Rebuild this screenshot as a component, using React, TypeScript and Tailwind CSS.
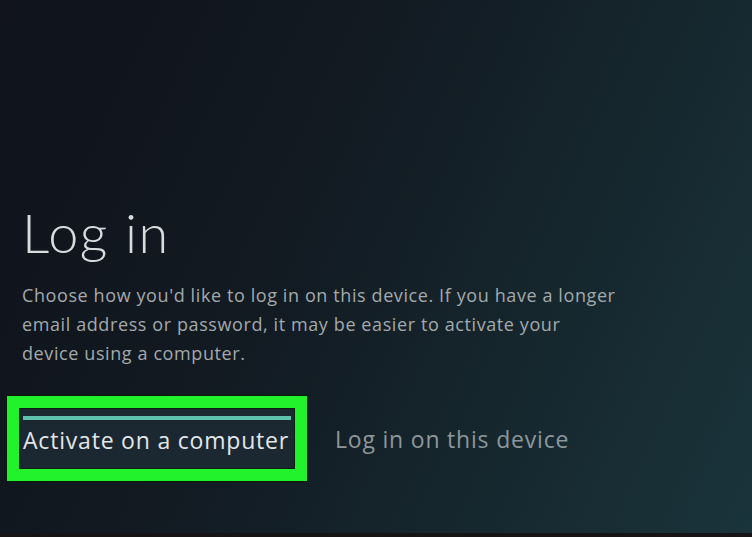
import React from 'react';

const body = { fontFamily: '"Open Sans", "Noto Sans", sans-serif' };
const heading = { fontFamily: 'Lato, "Noto Sans", sans-serif' };

export default function App() {
  return (
    <div
      className="flex h-[537px] w-[752px] flex-col overflow-hidden bg-[linear-gradient(115deg,#10131b_0%,#121a22_40%,#16272e_70%,#1a343b_100%)]"
      style={body}
    >
      <div className="flex flex-1 flex-col px-[22px] pt-[201px]">
        <h1
          className="text-[54px] font-light leading-[64px] tracking-[1.5px] text-[#d9dcdd]"
          style={heading}
        >
          Log in
        </h1>
        <p className="mt-[16px] whitespace-nowrap text-[18px] leading-[29px] tracking-[0.6px] text-[#a3a9ac]">
          Choose how you'd like to log in on this device. If you have a longer
          <br />
          email address or password, it may be easier to activate your
          <br />
          device using a computer.
        </p>

        <div className="mt-[27px] flex items-center">
          <div className="-ml-[16px] border border-[#0a1a0a] bg-[#22f22c] p-[12px]">
            <div className="w-[276px] border border-[#0c2012] bg-[#1b2832] px-[3px] pb-[11px] pt-[7px]">
              <div className="h-[4px] bg-[#5fc2ac]" />
              <div className="mt-[3px] whitespace-nowrap text-[23px] leading-[34px] tracking-[0.8px] text-[#e2e6e8]">
                Activate on a computer
              </div>
            </div>
          </div>
          <div className="ml-[27px] whitespace-nowrap text-[23px] leading-[30px] tracking-[0.8px] text-[#8d979b]">
            Log in on this device
          </div>
        </div>
      </div>
      <div className="h-[4px] bg-[#171416]" />
    </div>
  );
}
